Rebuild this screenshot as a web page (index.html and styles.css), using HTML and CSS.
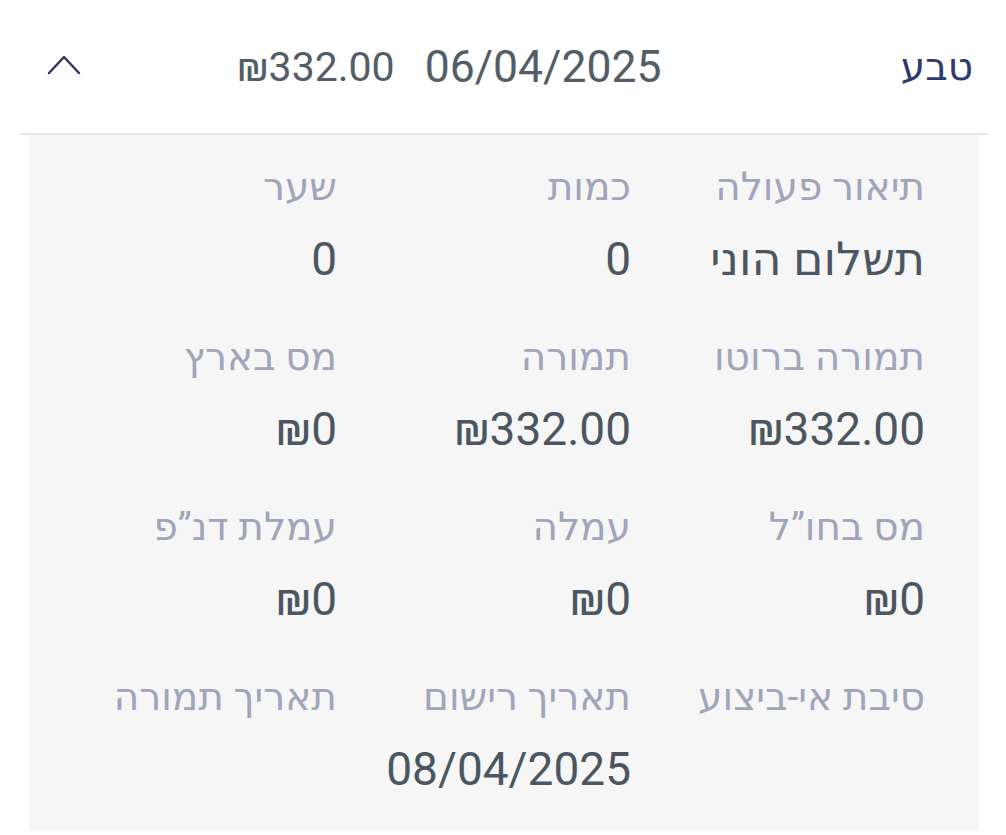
FILE: index.html
```html
<!DOCTYPE html>
<html lang="he" dir="rtl">
<head>
<meta charset="utf-8">
<link rel="stylesheet" href="styles.css">
</head>
<body>
<div class="card">
  <div class="card-header">
    <div class="name">טבע</div>
    <div class="date">06/04/2025</div>
    <div class="amount">₪332.00</div>
    <div class="toggle">
      <svg width="34" height="22" viewBox="0 0 34 22"><path d="M2 20 L17 4 L32 20" fill="none" stroke="#2b3468" stroke-width="2.4" stroke-linecap="round" stroke-linejoin="round"/></svg>
    </div>
  </div>
  <div class="divider"></div>
  <div class="details">
    <div class="field"><div class="label">תיאור פעולה</div><div class="value">תשלום הוני</div></div>
    <div class="field"><div class="label">כמות</div><div class="value">0</div></div>
    <div class="field"><div class="label">שער</div><div class="value">0</div></div>

    <div class="field"><div class="label">תמורה ברוטו</div><div class="value">₪332.00</div></div>
    <div class="field"><div class="label">תמורה</div><div class="value">₪332.00</div></div>
    <div class="field"><div class="label">מס בארץ</div><div class="value">₪0</div></div>

    <div class="field"><div class="label">מס בחו”ל</div><div class="value">₪0</div></div>
    <div class="field"><div class="label">עמלה</div><div class="value">₪0</div></div>
    <div class="field"><div class="label">עמלת דנ”פ</div><div class="value">₪0</div></div>

    <div class="field"><div class="label">סיבת אי-ביצוע</div><div class="value"></div></div>
    <div class="field"><div class="label">תאריך רישום</div><div class="value">08/04/2025</div></div>
    <div class="field"><div class="label">תאריך תמורה</div><div class="value"></div></div>
  </div>
</div>
</body>
</html>
```
FILE: styles.css
```css
html, body {
  margin: 0;
  padding: 0;
  background: #ffffff;
}
body {
  font-family: Roboto, "Noto Sans", "DejaVu Sans", sans-serif;
  width: 1006px;
  height: 835px;
  overflow: hidden;
}
.card {
  display: flex;
  flex-direction: column;
}
.card-header {
  display: flex;
  align-items: center;
  height: 133px;
  padding: 0 33px 0 47px;
}
.name {
  flex: 1;
  font-size: 39px;
  color: #2d3a6e;
}
.date {
  font-size: 44.5px;
  color: #525d67;
}
.amount {
  font-size: 41px;
  color: #525d67;
  margin-inline-start: 30px;
}
.toggle {
  margin-inline-start: 156px;
  width: 34px;
  height: 22px;
  display: flex;
  margin-top: -6px;
}
.divider {
  height: 2px;
  margin: 0 18px 0 20px;
  background: #e8e8e8;
}
.details {
  margin: 0 27px 0 29px;
  background: #f6f6f6;
  height: 695px;
  display: grid;
  grid-template-columns: repeat(3, 294px);
  grid-auto-rows: 170px;
  padding: 27px 54px 0 0;
  box-sizing: border-box;
}
.field {
  display: flex;
  flex-direction: column;
}
.label {
  font-size: 39px;
  color: #a0a5ba;
  line-height: 50px;
}
.value {
  font-size: 46px;
  color: #4b5660;
  line-height: 60px;
  margin-top: 17px;
}
```
